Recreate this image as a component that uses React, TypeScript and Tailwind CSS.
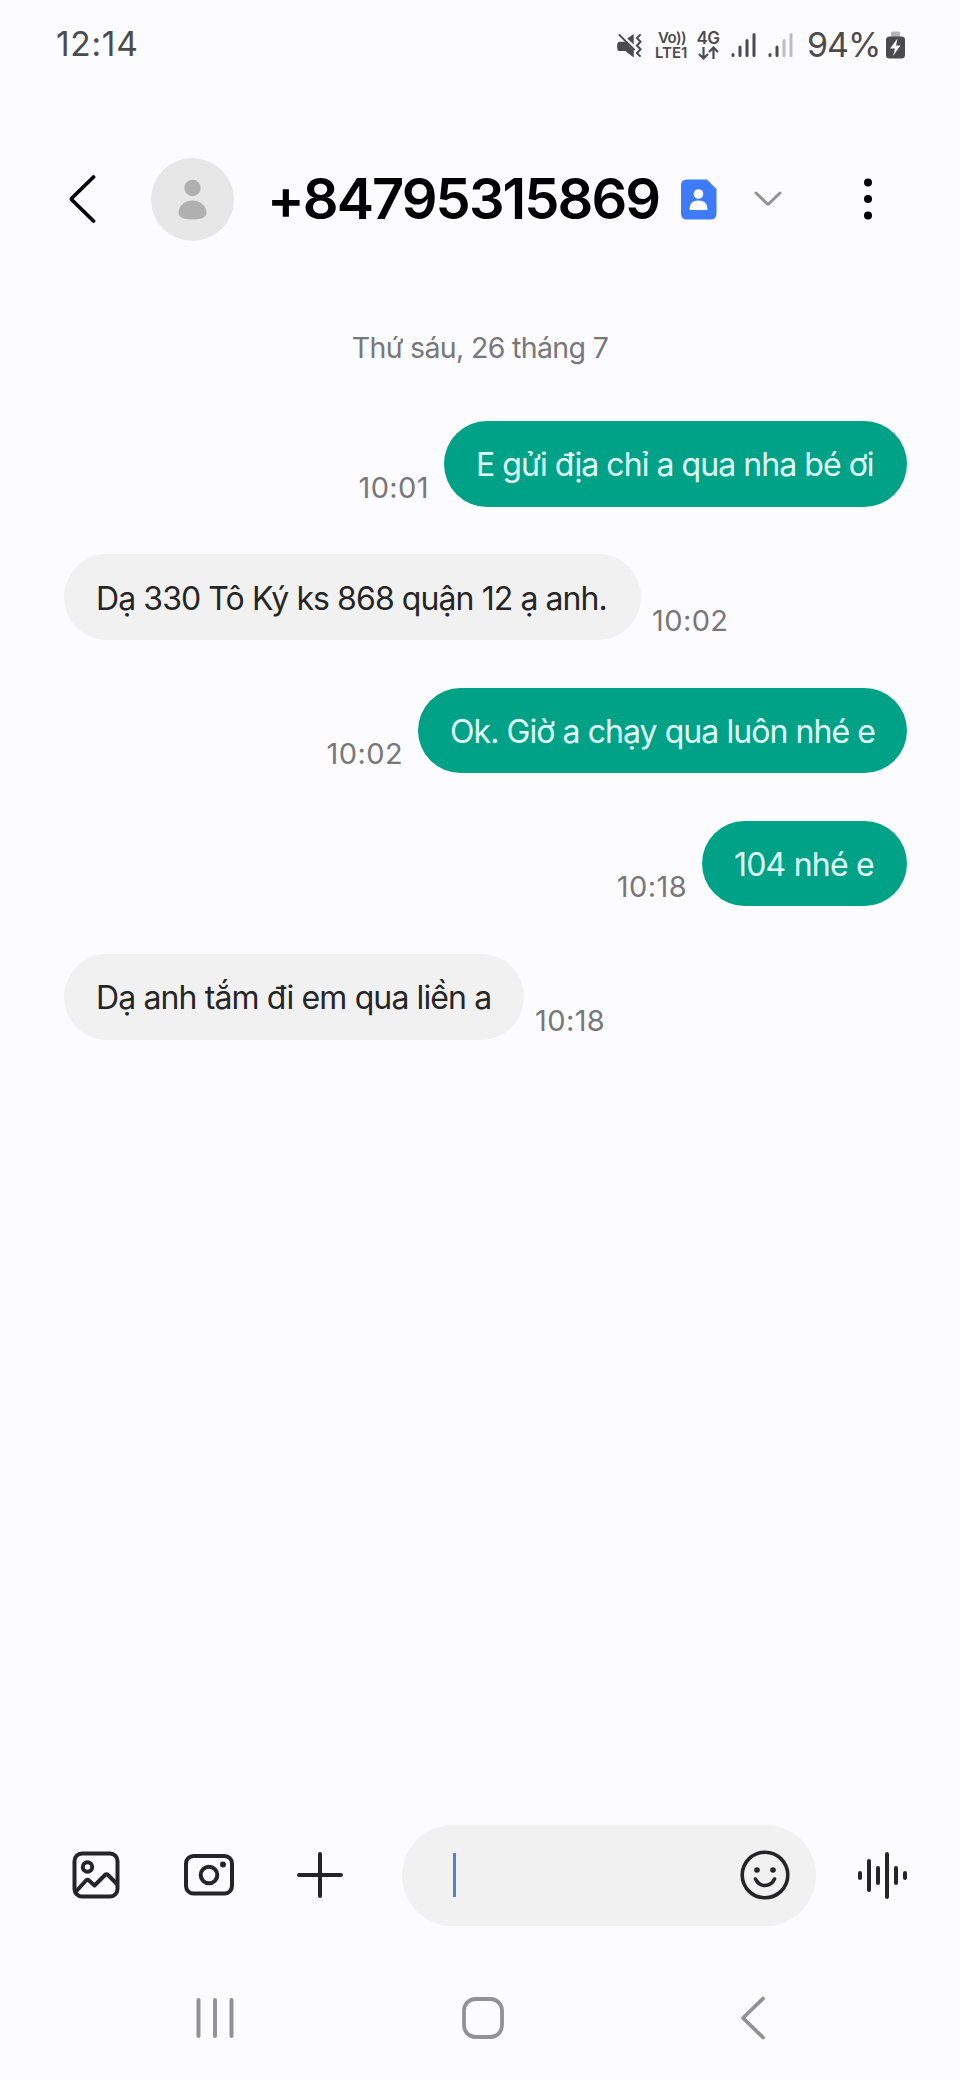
type Message = {
  text: string;
  time: string;
  sent: boolean;
  bubble: string;
};

const messages: Message[] = [
  { text: "E gửi địa chỉ a qua nha bé ơi", time: "10:01", sent: true, bubble: "w-[463px] tracking-[-0.95px]" },
  { text: "Dạ 330 Tô Ký ks 868 quận 12 ạ anh.", time: "10:02", sent: false, bubble: "w-[577px] tracking-[-0.92px]" },
  { text: "Ok. Giờ a chạy qua luôn nhé e", time: "10:02", sent: true, bubble: "w-[489px] tracking-[-0.93px]" },
  { text: "104 nhé e", time: "10:18", sent: true, bubble: "w-[205px] tracking-[-0.8px]" },
  { text: "Dạ anh tắm đi em qua liền a", time: "10:18", sent: false, bubble: "w-[460px] tracking-[-0.88px]" },
];

function StatusBar() {
  return (
    <div className="flex h-[90px] items-center pl-[56px] pr-[55px] text-[#4b4b4d]">
      <span className="text-[33.500px] leading-none tracking-[0.7px]">12:14</span>
      <div className="ml-auto flex h-[40px] items-center">
        <svg width="26" height="27" viewBox="0 0 28 28" className="mr-[12px]">
          <path d="M2 10h7l9 9v8l-9-7H2q-2-1-2-5t2-5Z" fill="currentColor" />
          <path d="M11 6.500l7-5v11.500Z" fill="currentColor" />
          <path d="M2 2l17 17" stroke="currentColor" strokeWidth="2.200" />
          <path d="M25.500 2l-4 4 3.800 4-3.800 4 3.800 4-3.800 4 3.800 4" fill="none" stroke="currentColor" strokeWidth="2.200" />
        </svg>
        <div className="mr-[8px] flex w-[34px] flex-col text-[15px] font-semibold leading-[15px]">
          <span className="pl-[3px] tracking-[-0.5px]">Vo))</span>
          <span>LTE1</span>
        </div>
        <div className="mr-[12px] flex w-[22px] flex-col items-center">
          <span className="text-[17px] font-semibold leading-[15px] tracking-[-0.5px]">4G</span>
          <svg width="21" height="14" viewBox="0 0 21 14" fill="none" stroke="currentColor" strokeWidth="2.200">
            <path d="M5.500 1v11M1 8l4.500 4.500L10 8M15.500 13V2M11 6l4.500-4.500L20 6" />
          </svg>
        </div>
        <svg width="25" height="26" viewBox="0 0 25 26" stroke="currentColor" strokeWidth="3" strokeLinecap="round" className="mr-[12px]">
          <path d="M2 22.500v1M9 15v8.500M16 8.500v15M23 2.500v21" />
        </svg>
        <svg width="25" height="26" viewBox="0 0 25 26" stroke="currentColor" strokeWidth="3" strokeLinecap="round" className="mr-[14px]">
          <path d="M2 22.500v1M9 15v8.500" />
          <path d="M16 8.500v15M23 2.500v21" stroke="#bdbdbf" />
        </svg>
        <span className="w-[79px] text-[34px] leading-none tracking-[-1px]">94%</span>
        <svg width="19" height="28" viewBox="0 0 19 28">
          <path d="M5 6V2q0-1.500 1.500-1.500h6Q14 .500 14 2v4Z" fill="#b4b4b6" />
          <rect y="5.500" width="19" height="22" rx="3.500" fill="currentColor" />
          <path d="M11.500 7.500L4 17.500h5L7 25l7.500-10.500H10Z" fill="#fcfcff" />
        </svg>
      </div>
    </div>
  );
}

function Header() {
  return (
    <header className="flex h-[218px] items-center pl-[69px] pr-[88px]">
      <svg width="28" height="52" viewBox="0 0 28 52" fill="none" stroke="#000" strokeWidth="3.800" strokeLinecap="round" strokeLinejoin="round">
        <path d="M24.500 4L3 25q-1 1 0 2l21.500 21" />
      </svg>
      <svg width="83" height="83" viewBox="0 0 83 83" className="ml-[54px]">
        <circle cx="41.500" cy="41.500" r="41.500" fill="#e7e7e7" />
        <circle cx="41.500" cy="30" r="8.200" fill="#b0b0b0" />
        <path d="M27.500 55c0-7 6-12.500 14-12.500s14 5.500 14 12.500c0 4.500-6 6.500-14 6.500s-14-2-14-6.500Z" fill="#b0b0b0" />
      </svg>
      <h1 className="ml-[33px] w-[414px] whitespace-nowrap text-[56px] font-semibold leading-none tracking-[-1.950px] text-black">
        +84795315869
      </h1>
      <svg width="36" height="41" viewBox="0 0 36 41">
        <path d="M6 .500h20L35.500 10v24.500q0 6-6 6H6q-6 0-6-6v-28q0-6 6-6Z" fill="#3d7bfa" />
        <circle cx="17.500" cy="15" r="4.800" fill="#fff" />
        <path d="M8.500 30q0-8.500 9-8.500t9 8.500q0 1-1 1h-16q-1 0-1-1Z" fill="#fff" />
      </svg>
      <svg width="28" height="18" viewBox="0 0 28 18" fill="none" stroke="#929294" strokeWidth="3" strokeLinecap="round" strokeLinejoin="round" className="ml-[37px]">
        <path d="M2 3l12 11.500L26 3" />
      </svg>
      <svg width="8" height="42" viewBox="0 0 8 42" className="ml-auto">
        <circle cx="4" cy="4.500" r="4" />
        <circle cx="4" cy="21" r="4" />
        <circle cx="4" cy="37.500" r="4" />
      </svg>
    </header>
  );
}

function MessageRow({ text, time, sent, bubble }: Message) {
  return (
    <div className={`flex h-[85.500px] items-end ${sent ? "flex-row-reverse gap-[15px]" : "gap-[11px]"}`}>
      <div
        className={`flex h-full items-center whitespace-nowrap rounded-full px-[32px] pt-[3px] text-[32px] ${bubble} ${
          sent ? "bg-[#00a287] text-[#e2fffa]" : "bg-[#f1f1f1] text-[#252525]"
        }`}
      >
        {text}
      </div>
      <span className="pb-[4px] text-[29px] leading-[30px] tracking-[0.4px] text-[#77777a]">{time}</span>
    </div>
  );
}

function Composer() {
  return (
    <div className="flex h-[102px] items-center pl-[72px] pr-[52px] text-[#252527]">
      <svg width="48" height="48" viewBox="0 0 48 48" fill="none" stroke="currentColor" strokeWidth="4" strokeLinejoin="round">
        <rect x="2.500" y="2.500" width="43" height="43" rx="7.500" />
        <circle cx="15.500" cy="16" r="4.700" />
        <path d="M3.500 41L14 29.500q1.500-1.500 3 0l5.500 5L33 24q1.500-1.500 3 0l9.500 9.500" />
      </svg>
      <svg width="51" height="42" viewBox="0 0 51 42" fill="none" stroke="currentColor" strokeWidth="4" className="ml-[64px]">
        <rect x="2" y="2" width="46" height="37.500" rx="7.500" />
        <circle cx="25" cy="21" r="8.300" />
        <circle cx="39" cy="10.500" r="3" fill="currentColor" stroke="none" />
      </svg>
      <svg width="48" height="48" viewBox="0 0 48 48" fill="none" stroke="currentColor" strokeWidth="4" strokeLinecap="round" className="ml-[61px]">
        <path d="M24 3v42M3 24h42" />
      </svg>
      <div className="ml-[58px] flex h-[101px] w-[414px] items-center justify-between rounded-full bg-[#f1f1f1] pl-[51px] pr-[26px]">
        <span className="h-[44px] w-[3px] bg-[#5580cf]" />
        <svg width="50" height="50" viewBox="0 0 50 50" fill="none" stroke="currentColor" strokeWidth="3.600" strokeLinecap="round">
          <circle cx="25" cy="25" r="22.800" />
          <circle cx="17" cy="20" r="2.800" fill="currentColor" stroke="none" />
          <circle cx="33" cy="20" r="2.800" fill="currentColor" stroke="none" />
          <path d="M15.500 29q3 6.500 9.500 6.500t9.500-6.500" />
        </svg>
      </div>
      <svg width="50" height="50" viewBox="0 0 50 50" fill="none" stroke="currentColor" strokeWidth="4" strokeLinecap="round" className="ml-auto">
        <path d="M2 23v5M11 11v29M20 18v15M29 4v43M38 18v15M47 23v5" />
      </svg>
    </div>
  );
}

function NavigationBar() {
  return (
    <nav className="flex h-[124px] items-center pl-[196px]">
      <svg width="38" height="44" viewBox="0 0 38 44" stroke="#929294" strokeWidth="4" strokeLinecap="round">
        <path d="M2.500 4v36M19 4v36M35.500 4v36" />
      </svg>
      <svg width="42" height="42" viewBox="0 0 42 42" fill="none" stroke="#929294" strokeWidth="3.800" className="ml-[228px]">
        <rect x="2" y="2" width="38" height="38" rx="11.500" />
      </svg>
      <svg width="27" height="46" viewBox="0 0 27 46" fill="none" stroke="#929294" strokeWidth="3.800" strokeLinecap="round" strokeLinejoin="round" className="ml-[236px]">
        <path d="M23 3.500L3 23l20 19.500" />
      </svg>
    </nav>
  );
}

export default function App() {
  return (
    <div className="flex h-[2080px] w-[960px] flex-col overflow-hidden bg-[#fcfcff] font-['Inter','Noto_Sans',sans-serif]">
      <StatusBar />
      <Header />
      <main className="flex flex-1 flex-col pl-[64px] pr-[53px] pt-[23px]">
        <div className="mr-[11px] h-[90px] text-center text-[28.500px] leading-[34px] tracking-[-0.65px] text-[#77777a]">
          Thứ sáu, 26 tháng 7
        </div>
        <div className="flex flex-col gap-[47.800px]">
          {messages.map((message) => (
            <MessageRow key={message.text} {...message} />
          ))}
        </div>
      </main>
      <Composer />
      <div className="h-[30px]" />
      <NavigationBar />
    </div>
  );
}
